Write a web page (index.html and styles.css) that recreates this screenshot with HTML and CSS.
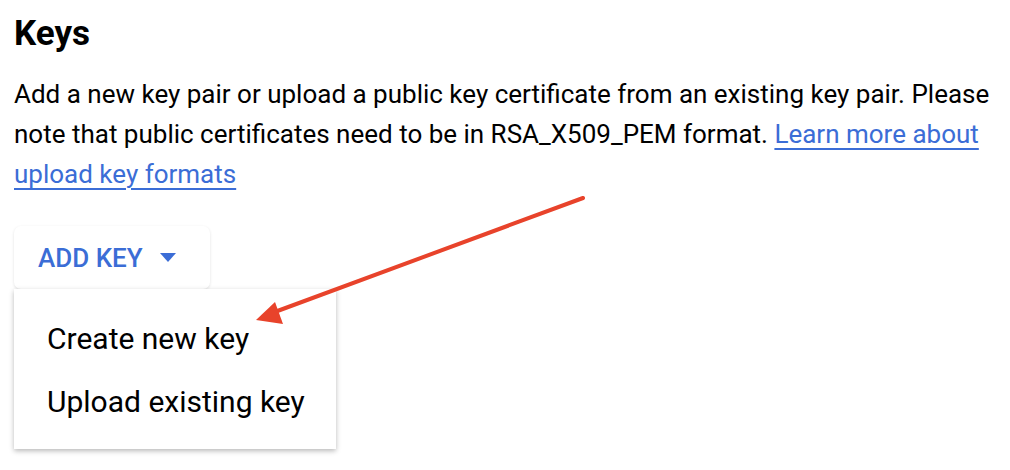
FILE: index.html
```html
<!DOCTYPE html>
<html>
<head>
<meta charset="utf-8">
<link rel="stylesheet" href="styles.css">
</head>
<body>
<div class="page">
  <h1 class="title">Keys</h1>
  <p class="desc">Add a new key pair or upload a public key certificate from an existing key pair. Please note that public certificates need to be in RSA_X509_PEM format. <a class="link" href="#">Learn more about upload key formats</a></p>
  <div class="dropdown">
    <button class="add-btn"><span class="btn-label">ADD KEY</span><span class="caret"></span></button>
    <ul class="menu">
      <li class="menu-item">Create new key</li>
      <li class="menu-item">Upload existing key</li>
    </ul>
  </div>
</div>
<svg class="arrow" width="1010" height="470" viewBox="0 0 1010 470">
  <line x1="583" y1="198" x2="272" y2="313" stroke="#e8432b" stroke-width="4" stroke-linecap="round"/>
  <polygon points="256,320 275,302 283,324" fill="#e8432b"/>
</svg>
</body>
</html>
```
FILE: styles.css
```css
html, body {
  margin: 0;
  padding: 0;
  background: #ffffff;
}
body {
  font-family: Roboto, "Liberation Sans", sans-serif;
  color: #000;
  position: relative;
  width: 1010px;
  height: 470px;
  overflow: hidden;
}
.page {
  padding: 14px 0 0 14px;
  width: 985px;
}
.title {
  margin: 0;
  font-size: 35px;
  line-height: 40px;
  font-weight: 700;
}
.desc {
  margin: 20px 0 0 0;
  font-size: 26px;
  line-height: 40px;
}
.link {
  color: #3b6dd6;
  text-decoration: underline;
  text-decoration-thickness: 2px;
  text-underline-offset: 5px;
}
.dropdown {
  margin-top: 32px;
  display: flex;
  flex-direction: column;
  align-items: flex-start;
}
.add-btn {
  display: flex;
  align-items: center;
  box-sizing: border-box;
  height: 63px;
  width: 196px;
  padding: 0 0 0 24px;
  border: none;
  border-radius: 7px;
  background: #fff;
  box-shadow: 0 1px 3px rgba(0,0,0,0.12);
  font-family: Roboto, "Liberation Sans", sans-serif;
  font-size: 26px;
  font-weight: 500;
  color: #3b6dd6;
  white-space: nowrap;
}
.btn-label {
  width: 122px;
  text-align: left;
}
.caret {
  display: inline-block;
  width: 0;
  height: 0;
  border-left: 8px solid transparent;
  border-right: 8px solid transparent;
  border-top: 9px solid #3b6dd6;
}
.menu {
  list-style: none;
  margin: 0;
  padding: 18px 0 16px 0;
  width: 322px;
  background: #fff;
  box-shadow: 0 2px 5px rgba(0,0,0,0.28);
}
.menu-item {
  padding-left: 33px;
  font-size: 30px;
  line-height: 63px;
  height: 63px;
}
.arrow {
  position: absolute;
  left: 0;
  top: 0;
  pointer-events: none;
}
```
